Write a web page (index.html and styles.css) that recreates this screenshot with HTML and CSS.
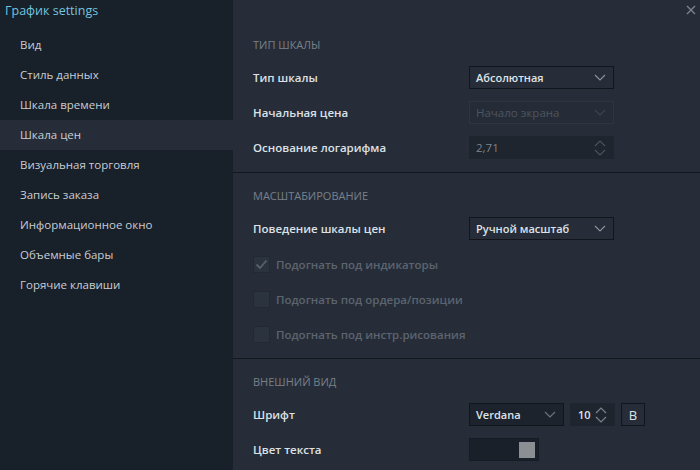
FILE: index.html
```html
<!DOCTYPE html>
<html lang="ru">
<head>
<meta charset="utf-8">
<title>График settings</title>
<link rel="stylesheet" href="styles.css">
</head>
<body>
<div class="app">
  <aside class="sidebar">
    <div class="title">График settings</div>
    <nav class="nav">
      <div class="nav-item">Вид</div>
      <div class="nav-item">Стиль данных</div>
      <div class="nav-item">Шкала времени</div>
      <div class="nav-item active">Шкала цен</div>
      <div class="nav-item">Визуальная торговля</div>
      <div class="nav-item">Запись заказа</div>
      <div class="nav-item">Информационное окно</div>
      <div class="nav-item">Объемные бары</div>
      <div class="nav-item">Горячие клавиши</div>
    </nav>
  </aside>
  <main class="panel">
    <button class="close" aria-label="close">
      <svg width="10" height="10" viewBox="0 0 10 10"><path d="M1 1L9 9M9 1L1 9" stroke="#7d8590" stroke-width="1.3" fill="none"/></svg>
    </button>
    <section class="section first">
      <div class="sec-head">ТИП ШКАЛЫ</div>
      <div class="row">
        <div class="label">Тип шкалы</div>
        <div class="select w144"><span>Абсолютная</span>
          <svg class="chev" width="12" height="7" viewBox="0 0 12 7"><path d="M1 1L6 6L11 1" stroke="#8a919b" stroke-width="1.2" fill="none"/></svg>
        </div>
      </div>
      <div class="row">
        <div class="label">Начальная цена</div>
        <div class="select w144 disabled"><span>Начало экрана</span>
          <svg class="chev" width="12" height="7" viewBox="0 0 12 7"><path d="M1 1L6 6L11 1" stroke="#3c444f" stroke-width="1.2" fill="none"/></svg>
        </div>
      </div>
      <div class="row">
        <div class="label">Основание логарифма</div>
        <div class="input w144"><span class="dim">2,71</span>
          <svg class="spin" width="12" height="16" viewBox="0 0 12 16"><path d="M1 6L6 1L11 6M1 10L6 15L11 10" stroke="#4a525d" stroke-width="1.2" fill="none"/></svg>
        </div>
      </div>
    </section>
    <section class="section mid">
      <div class="sec-head">МАСШТАБИРОВАНИЕ</div>
      <div class="row">
        <div class="label">Поведение шкалы цен</div>
        <div class="select w144"><span>Ручной масштаб</span>
          <svg class="chev" width="12" height="7" viewBox="0 0 12 7"><path d="M1 1L6 6L11 1" stroke="#8a919b" stroke-width="1.2" fill="none"/></svg>
        </div>
      </div>
      <div class="checks">
        <div class="row check-row">
          <div class="checkbox">
            <svg width="13" height="11" viewBox="0 0 13 11"><path d="M1.5 5.5L5 9L11.5 1.5" stroke="#59616c" stroke-width="1.8" fill="none"/></svg>
          </div>
          <div class="check-label">Подогнать под индикаторы</div>
        </div>
        <div class="row check-row">
          <div class="checkbox"></div>
          <div class="check-label">Подогнать под ордера/позиции</div>
        </div>
        <div class="row check-row">
          <div class="checkbox"></div>
          <div class="check-label">Подогнать под инстр.рисования</div>
        </div>
      </div>
    </section>
    <section class="section last">
      <div class="sec-head">ВНЕШНИЙ ВИД</div>
      <div class="row">
        <div class="label">Шрифт</div>
        <div class="controls">
          <div class="select dark w94"><span>Verdana</span>
            <svg class="chev" width="12" height="7" viewBox="0 0 12 7"><path d="M1 1L6 6L11 1" stroke="#6d747e" stroke-width="1.2" fill="none"/></svg>
          </div>
          <div class="input num"><span>10</span>
            <svg class="spin" width="12" height="16" viewBox="0 0 12 16"><path d="M1 6L6 1L11 6M1 10L6 15L11 10" stroke="#7a828c" stroke-width="1.2" fill="none"/></svg>
          </div>
          <div class="bold-btn">B</div>
        </div>
      </div>
      <div class="row">
        <div class="label">Цвет текста</div>
        <div class="color-box"><div class="swatch"></div></div>
      </div>
    </section>
  </main>
</div>
</body>
</html>
```

FILE: styles.css
```css
* { box-sizing: border-box; }
html, body { margin: 0; padding: 0; }
body {
  width: 700px;
  height: 470px;
  overflow: hidden;
  background: #262d38;
  font-family: "Open Sans", "Noto Sans", sans-serif;
  font-size: 11.5px;
  color: #dfe3e8;
}
.app {
  display: flex;
  height: 470px;
}
.sidebar {
  width: 233px;
  flex: none;
  background: #18202a;
}
.title {
  padding: 2px 0 0 5px;
  height: 30px;
  font-size: 12.5px;
  line-height: 17px;
  color: #72c4df;
}
.nav { display: flex; flex-direction: column; }
.nav-item {
  height: 30px;
  line-height: 30px;
  padding-left: 20px;
  font-size: 11.5px;
  color: #c9cdd3;
}
.nav-item.active { background: #262d38; }
.panel {
  flex: 1;
  position: relative;
  background: #262d38;
  padding-top: 23px;
}
.close {
  position: absolute;
  top: 4px;
  right: 3px;
  width: 12px;
  height: 12px;
  padding: 0;
  border: 0;
  background: transparent;
  display: flex;
  align-items: center;
  justify-content: center;
}
.section {
  padding: 15px 0 7px 20px;
  border-bottom: 1px solid #13181f;
}
.section.first { padding-top: 14px; padding-bottom: 7px; }
.section.mid { padding-bottom: 6px; }
.section.last { border-bottom: 0; }
.sec-head {
  height: 16px;
  line-height: 16px;
  font-size: 11px;
  color: #78808a;
  margin-bottom: 7px;
}
.checks { padding-top: 1px; }
.row {
  height: 35px;
  display: flex;
  align-items: center;
}
.label {
  width: 216px;
  font-weight: 600;
  font-size: 11.5px;
  color: #dde1e6;
}
.select, .input {
  height: 23px;
  display: flex;
  align-items: center;
  justify-content: space-between;
  padding: 0 7px 0 6px;
  font-weight: 600;
  font-size: 11px;
  color: #dfe3e8;
}
.select {
  border: 1px solid #12161c;
  background: #262d38;
}
.select.dark { background: #1c232c; }
.select.disabled {
  border-color: #2d3540;
  color: #4d555f;
  font-weight: 400;
  font-size: 11.5px;
  background: #252c37;
}
.input {
  background: #1e252e;
  border: 1px solid #1e252e;
}
.input .dim { color: #7c838c; font-weight: 400; font-size: 11.5px; }
.w144 { width: 145px; }
.w94 { width: 95px; }
.controls { display: flex; gap: 6px; }
.num { width: 45px; padding-left: 7px; }
.bold-btn {
  width: 24px;
  height: 23px;
  border: 1px solid #12161c;
  display: flex;
  align-items: center;
  justify-content: center;
  font-size: 13px;
  color: #dfe3e8;
}
.check-row { gap: 6px; }
.checkbox {
  width: 17px;
  height: 17px;
  background: #2b333e;
  border: 1px solid #222932;
  display: flex;
  align-items: center;
  justify-content: center;
}
.check-label {
  font-weight: 600;
  font-size: 11.5px;
  color: #5c646f;
}
.color-box {
  width: 70px;
  height: 23px;
  background: #1a2029;
  border: 1px solid #171c24;
  display: flex;
  align-items: center;
  justify-content: flex-end;
  padding-right: 3px;
}
.swatch {
  width: 16px;
  height: 16px;
  background: #8b8e93;
}
```
